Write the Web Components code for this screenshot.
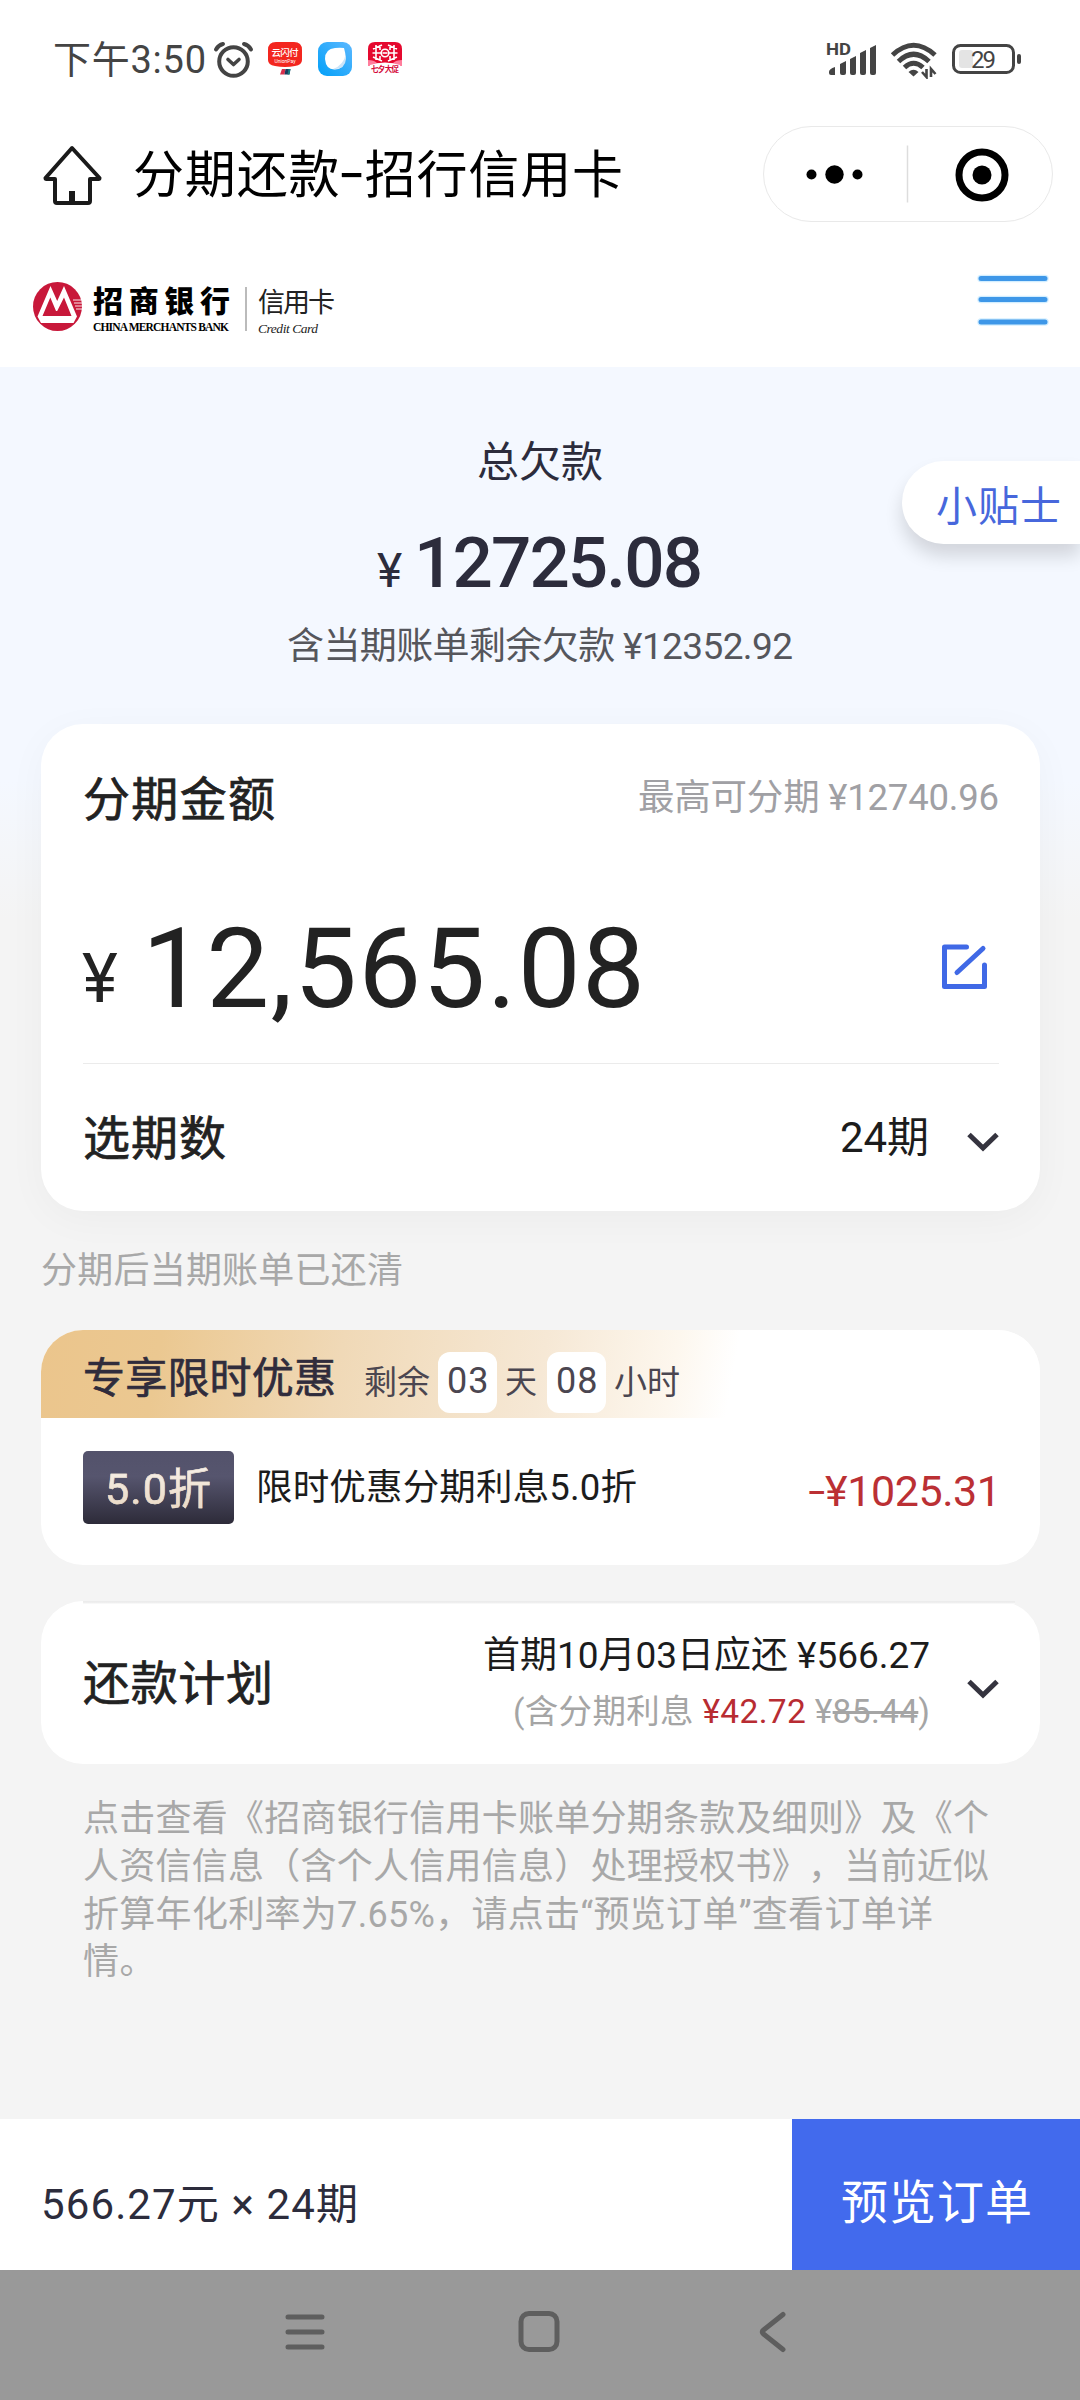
<!DOCTYPE html>
<html lang="zh-CN">
<head>
<meta charset="utf-8">
<title>分期还款-招行信用卡</title>
<style>
  html, body { margin: 0; padding: 0; }
  body { width: 1080px; height: 2400px; overflow: hidden; background: #f4f4f4;
    font-family: Roboto, "Noto Sans CJK SC", sans-serif; color: #222; text-spacing-trim: space-all; }
</style>
</head>
<body>
<app-screen></app-screen>
<script>
const define = (name, html) => {
  const tpl = document.createElement('template');
  tpl.innerHTML = '<style>:host{display:block;box-sizing:border-box}*{box-sizing:border-box}svg{display:block;flex:none}.t{-webkit-text-stroke:.7px currentColor}.dash{display:inline-block;font-family:Inter;transform:translateY(-.04em) scaleX(1.2)}</style>' + html;
  customElements.define(name, class extends HTMLElement {
    constructor() {
      super();
      this.attachShadow({ mode: 'open' }).appendChild(tpl.content.cloneNode(true));
    }
  });
};

/* One line of text, tracked so that it fills the width given in w */
customElements.define('fit-text', class extends HTMLElement {
  constructor() {
    super();
    this.attachShadow({ mode: 'open' }).innerHTML =
      '<style>:host{display:block;flex:none;line-height:1;white-space:nowrap}span{display:inline-block;line-height:inherit;vertical-align:top}</style><span><slot></slot></span>';
  }
  connectedCallback() {
    const w = +this.getAttribute('w'), size = this.getAttribute('size');
    this.style.fontSize = size + 'px';
    this.style.width = w + 'px';
    this.style.letterSpacing = '0px';
    const natural = this.shadowRoot.querySelector('span').getBoundingClientRect().width;
    const n = [...this.textContent].length;
    if (n > 1) this.style.letterSpacing = ((w - natural) / (n - 1)).toFixed(3) + 'px';
  }
});

define('phone-status', `
<style>
:host{display:flex;height:100px;padding:41px 58.5px 0 53px;color:#444;align-items:flex-start}
.icon{margin-left:16px}
.gap{flex:1}
</style>
<fit-text size="38" w="153">下午3:50</fit-text>
<svg style="margin-left:7px" width="42" height="38" viewBox="0 0 42 38" fill="none" stroke="#444" stroke-width="4" stroke-linecap="round"><circle cx="20.5" cy="20.5" r="14.3"/><path d="M15 18.5l5.5 5 5.5-5" stroke-linejoin="round" stroke-width="3.6"/><path d="M3 8.5Q5.500 4 10 3M38 8.500Q35.500 4 31 3"/></svg>
<svg style="margin-left:13px" width="34" height="38" viewBox="0 0 34 38"><path d="M8 1h18q8 0 8 8v10q0 5-7 6-5 1-10 1t-10-1q-7-1-7-6V9q0-8 8-8z" fill="#f3261f"/><text x="17" y="15" font-size="9.500" fill="#fff" text-anchor="middle" font-weight="500" textLength="27">云闪付</text><text x="17" y="21.500" font-size="5" fill="#fff" text-anchor="middle">UnionPay</text><path d="M14 28h3.500l-1 5.500h-4.500z" fill="#d8304c"/><path d="M17.500 28h5l-1 5.500h-5z" fill="#1c3a5c"/><path d="M20.500 28h2l-1 5.500h-2z" fill="#187c80"/></svg>
<svg class="icon" width="34" height="38" viewBox="0 0 34 38"><defs><linearGradient id="b" x1="1" x2="0" y2="1"><stop stop-color="#5cb8ff"/><stop offset="1" stop-color="#02a0f8"/></linearGradient></defs><rect y="1" width="34" height="34" rx="9" fill="url(#b)"/><path d="M7 18q0-10 10-11 5-.5 9 0 2 5 1 11-1 10-10 10.500T7 18z" fill="#fff"/><path d="M28 12Q26 24 15 28q12 1 13-10z" fill="#cbe4f8"/></svg>
<svg class="icon" width="34" height="38" viewBox="0 0 34 38"><path d="M7 1h20q7 0 7 7v15H0V8q0-7 7-7z" fill="#e5092f"/><path d="M0 19q6 0 9 3h16q3-3 9-3v6H0z" fill="#ff7d9c"/><path d="M2 24q15-5 30 0l1 8H1z" fill="#fff"/><g fill="none" stroke="#fff" stroke-width="1.600"><path d="M8 4v15M12 4v5M12 15v5M5 8l9-4M4.500 12H13M5 16l9 4M26 4v15M22 4v5M22 15v5M29 8l-9-4M29.500 12H21M29 16l-9 4"/><circle cx="17" cy="12" r="3.800"/><path d="M14.500 12h5"/></g><text x="17" y="31" font-size="7.500" fill="#d40638" text-anchor="middle" font-weight="700" textLength="28">七夕大促</text></svg>
<span class="gap"></span>
<svg width="52" height="38" viewBox="0 0 52 38" fill="#444"><text x="0" y="14" font-size="16" font-weight="700" textLength="25" lengthAdjust="spacingAndGlyphs">HD</text><path d="M3 31q0-3 6-5v8H5q-2 0-2-2zM14 23l6-3v12q0 2-2 2h-2q-2 0-2-2zM24 18l6-3v17q0 2-2 2h-2q-2 0-2-2zM34 12l6-3v23q0 2-2 2h-2q-2 0-2-2zM44 7l6-3v28q0 2-2 2h-2q-2 0-2-2z"/></svg>
<svg style="margin-left:11.5px" width="48" height="38" viewBox="0 0 48 38" fill="none" stroke="#444" stroke-width="5"><path d="M2.500 14Q23.500-5.500 45 14M8.500 20.500Q23.500 6 39 20.500M14.500 26.500Q23.500 18 33 26.500"/><path d="M18.500 31q5-4.500 10 0l-5 4.500z" fill="#444" stroke="none"/><path d="M36.500 28v8l-4.500-5M41 36v-8l4.500 5" stroke-width="2.600"/></svg>
<svg style="margin-left:14px" width="70" height="38" viewBox="0 0 70 38"><rect x="1.500" y="4.500" width="60" height="27" rx="7" fill="none" stroke="#444" stroke-width="3"/><rect x="7" y="9" width="14" height="18" rx="3" fill="#e4e4e4"/><rect x="65" y="13" width="4" height="10" rx="2" fill="#444"/><text x="31.500" y="26.500" font-size="24" fill="#444" text-anchor="middle" textLength="25">29</text></svg>
`);

define('mini-nav', `
<style>
:host{display:flex;height:150px;padding:24px 27px 0 43px;color:#000}
.capsule{margin-left:auto;width:290px;height:96px;margin-top:2px;border:1.500px solid #e9e9e9;border-radius:49px;display:flex;align-items:center}
</style>
<svg style="margin-top:20px" width="60" height="62" viewBox="0 0 60 62" fill="none" stroke="#1a1a1a" stroke-width="4" stroke-linejoin="round"><path d="M29 4L2.500 34q0 1 1 1H12v22q0 2 2 2h31q2 0 2-2V35h8.500q1 0 1-1z"/><path d="M29 47v10" stroke-width="6"/></svg>
<fit-text size="51" w="490" style="margin:25px 0 0 30px">分期还款<span class="dash">-</span>招行信用卡</fit-text>
<div class="capsule"><svg width="287" height="93" viewBox="764.5 127.5 287 93"><circle cx="812" cy="174" r="5"/><circle cx="835" cy="174" r="9.200"/><circle cx="858" cy="174" r="5"/><path d="M908 145v57" stroke="#ddd" stroke-width="1.500"/><circle cx="982.500" cy="174.500" r="23" fill="none" stroke="#000" stroke-width="7"/><circle cx="982.500" cy="174.500" r="9.500"/></svg></div>
`);

define('bank-header', `
<style>
:host{display:flex;height:117px;padding:0 31px 0 33px;color:#000}
.names{display:flex;flex-direction:column;margin:37px 0 0 11px;font-weight:900}
.names fit-text+fit-text,.card fit-text+fit-text{margin-top:5px;font-family:"Liberation Serif"}
.rule{width:2px;height:44px;background:#bbb;margin:37px 11px 0 15px}
.card{display:flex;flex-direction:column;margin-top:40px;color:#222}
</style>
<svg style="margin-top:32px" width="49" height="49" viewBox="0 0 49 49"><circle cx="24.500" cy="24.500" r="24.500" fill="#c8183a"/><path d="M4.500 34.500L17.500 4l6.700 15L31 4l13 30.500-3.500 6.500H8z" fill="#fff"/><path d="M9.500 34L17.300 15.500 23 29l1.200 0L31 15.500 38.500 34z" fill="#c8183a"/><path d="M40 18h8M41 21h8M42 24h7M43 27h6" stroke="#fff" stroke-width=".9"/></svg>
<div class="names"><fit-text size="30" w="137">招商银行</fit-text><fit-text size="11.500" w="136" style="font-weight:700">CHINA MERCHANTS BANK</fit-text></div>
<div class="rule"></div>
<div class="card"><fit-text size="27" w="77">信用卡</fit-text><fit-text size="13.500" w="60" style="font-style:italic">Credit Card</fit-text></div>
<svg style="margin:22px 0 0 auto" width="73" height="56" viewBox="0 0 73 56" stroke-linecap="round"><g stroke="#d3eeff" stroke-width="7.500"><path d="M5 6.500h64M5 27.500h64M5 50h64"/></g><g stroke="#3e97e8" stroke-width="5"><path d="M5 6.500h64M5 27.500h64M5 50h64"/></g></svg>
`);

define('debt-summary', `
<style>
:host{position:relative;height:357px;padding-top:75px;color:#2c2c3c}
.col{display:flex;flex-direction:column;align-items:center}
.sum{display:flex;align-items:baseline;margin-top:43px;gap:10px;font-weight:500}
.tip{position:absolute;right:0;top:94px;width:178px;height:83px;padding:26px 0 0 34px;background:#fff;border-radius:42px 0 0 42px;box-shadow:0 12px 18px rgba(0,0,0,.14);color:#4767dc}
</style>
<div class="col"><fit-text size="42" w="126">总欠款</fit-text>
<div class="sum"><fit-text size="48" w="27" style="font-weight:400">¥</fit-text><fit-text size="71" w="289">12725.08</fit-text></div>
<fit-text size="37" w="506" style="margin-top:30px;color:#55565c">含当期账单剩余欠款 ¥12352.92</fit-text></div>
<div class="tip"><fit-text size="41" w="125">小贴士</fit-text></div>
`);

define('chevron-down', `
<style>:host{width:32px;height:20px}</style>
<svg width="32" height="20" viewBox="0 0 32 20" fill="none" stroke="#35343f" stroke-width="5"><path d="M2 2.500l14 13.500 14-13.500"/></svg>
`);

define('amount-card', `
<style>
:host{height:487px;margin:0 40px 0 41px;padding:52px 41px 0 42px;background:#fff;border-radius:42px;box-shadow:0 8px 40px rgba(0,0,0,.035)}
.row{display:flex;align-items:flex-start;justify-content:space-between}
.value{height:288px;border-bottom:1.500px solid #ebebeb;justify-content:flex-start}
.head{height:0}
</style>
<div class="row head"><fit-text class="t" size="47" w="192">分期金额</fit-text><fit-text size="36.5" w="361" style="margin-top:4px;color:#a0a0a4">最高可分期 ¥12740.96</fit-text></div>
<div class="row value"><fit-text size="68" w="36" style="margin:169px 0 0 -1px">¥</fit-text><fit-text size="112" w="503" style="margin:137px 0 0 24px">12,565.08</fit-text>
<svg style="margin:166px 11px 0 auto" width="48" height="48" viewBox="0 0 48 48" fill="none" stroke="#4069e6" stroke-width="5" stroke-linecap="round" stroke-linejoin="round"><path d="M26.500 5H4.500v39.500h40V23M43 6.500L17 30.500"/></svg></div>
<div class="row" style="margin-top:51px"><fit-text class="t" size="47" w="143">选期数</fit-text><fit-text size="42" w="89" style="margin:2px 38px 0 auto;color:#1c1c1c">24期</fit-text><chevron-down style="margin-top:17px"></chevron-down></div>
`);

define('promo-card', `
<style>
:host{height:235px;margin:0 40px 0 41px;background:#fff;border-radius:42px;overflow:hidden}
.band{height:88px;display:flex;align-items:flex-start;padding-left:42px;color:#4b4650;background:linear-gradient(100deg,#ebc58c 0,#ebc891 12%,#f0d9b7 30%,#f6e8d5 50%,#fdf7ee 63%,#fff 69%)}
.chip{width:59px;height:61px;margin-top:22px;padding:11px 0 0 9px;background:#fff;border-radius:12px}
.row{display:flex;align-items:flex-start;padding:33px 42px 0 42px}
.badge{width:151px;height:73px;border-radius:5px;padding:17px 0 0 22px;background:linear-gradient(#53526b,#56556e 35%,#2d2b39)}
.badge fit-text{background:linear-gradient(#f6efe8,#ead8c2);-webkit-background-clip:text;color:transparent;-webkit-text-stroke:.5px #f0e3d4}
</style>
<div class="band"><fit-text class="t" size="42" w="253" style="margin-top:28px;color:#302c3c">专享限时优惠</fit-text>
<fit-text size="33" w="66" style="margin:36px 8px 0 28px">剩余</fit-text><div class="chip"><fit-text size="36" w="41.5">03</fit-text></div>
<fit-text size="32" w="32" style="margin:36px 10px 0 8px">天</fit-text><div class="chip"><fit-text size="36" w="41.5">08</fit-text></div>
<fit-text size="33" w="66" style="margin:36px 0 0 8px">小时</fit-text></div>
<div class="row"><div class="badge"><fit-text size="43" w="106">5.0折</fit-text></div>
<fit-text size="36.5" w="381" style="margin:19px 0 0 22px;color:#1c1c1c">限时优惠分期利息5.0折</fit-text>
<fit-text size="43" w="193" style="margin:19px -3px 0 auto;color:#bb3034"><span class="dash" style="font-size:38px">-</span>¥1025.31</fit-text></div>
`);

define('plan-card', `
<style>
:host{height:163px;margin:0 40px 0 41px;background:#fff;border-radius:42px;padding:0 41px 0 42px}
.line{height:3px;margin-right:-16px;background:linear-gradient(#ebebeb,#efefef 60%,#fff)}
.row{display:flex;align-items:flex-start}
.col{display:flex;flex-direction:column;align-items:flex-end;margin:33px 37px 0 auto}
.red{color:#b82c32}
</style>
<div class="line"></div>
<div class="row"><fit-text class="t" size="47" w="190" style="margin-top:56px">还款计划</fit-text>
<div class="col"><fit-text size="37" w="447" style="color:#1c1c1c">首期10月03日应还 ¥566.27</fit-text>
<fit-text size="33.5" w="417" style="margin-top:21px;color:#a5a5a5">(含分期利息 <span class="red">¥42.72</span> ¥<s>85.44</s>)</fit-text></div>
<chevron-down style="margin-top:75px"></chevron-down></div>
`);

define('legal-note', `
<style>:host{margin:32px 0 0 83px;color:#a8a8a8}fit-text{line-height:47.8px}</style>
<fit-text size="36" w="906">点击查看《招商银行信用卡账单分期条款及细则》及《个</fit-text>
<fit-text size="36" w="906">人资信信息（含个人信用信息）处理授权书》，当前近似</fit-text>
<fit-text size="36" w="850">折算年化利率为7.65%，请点击“预览订单”查看订单详</fit-text>
<fit-text size="36" w="72.5">情。</fit-text>
`);

define('order-bar', `
<style>
:host{display:flex;height:151px;background:#fff}
.btn{width:288px;margin-left:auto;padding:60px 0 0 49px;background:#426aed;color:#fff}
</style>
<fit-text size="42" w="317" style="margin:65px 0 0 41px;color:#2c2c3c">566.27元 × 24期</fit-text>
<div class="btn"><fit-text size="47" w="191">预览订单</fit-text></div>
`);

define('system-nav', `
<style>:host{display:flex;height:130px;padding:38px 0 0 282px;background:#999}svg{fill:none;stroke:#5e5e5e;stroke-width:5;stroke-linecap:round;stroke-linejoin:round}</style>
<svg width="48" height="48" viewBox="0 0 48 48"><path d="M6 9h34M6 24h34M6 39h34"/></svg>
<svg style="margin-left:185px" width="48" height="48" viewBox="0 0 48 48"><rect x="6" y="5.500" width="36" height="36" rx="8"/></svg>
<svg style="margin-left:192px" width="34" height="48" viewBox="0 0 34 48"><path d="M28 6.500L8.500 22q-2.500 2 0 4L28 41.500"/></svg>
`);

define('app-screen', `
<style>
:host{display:flex;flex-direction:column;height:2400px}
.white{background:#fff}
.page{flex:1;background:linear-gradient(#f4f8ff 0,#f4f8ff 414px,#f4f4f4 552px)}
.note{margin:42px 0 0 41px;color:#a8a8a8}
</style>
<div class="white"><phone-status></phone-status><mini-nav></mini-nav><bank-header></bank-header></div>
<div class="page"><debt-summary></debt-summary><amount-card></amount-card>
<fit-text class="note" size="36" w="362">分期后当期账单已还清</fit-text>
<promo-card style="margin-top:41px"></promo-card><plan-card style="margin-top:36px"></plan-card><legal-note></legal-note></div>
<order-bar></order-bar><system-nav></system-nav>
`);
</script>
</body>
</html>
